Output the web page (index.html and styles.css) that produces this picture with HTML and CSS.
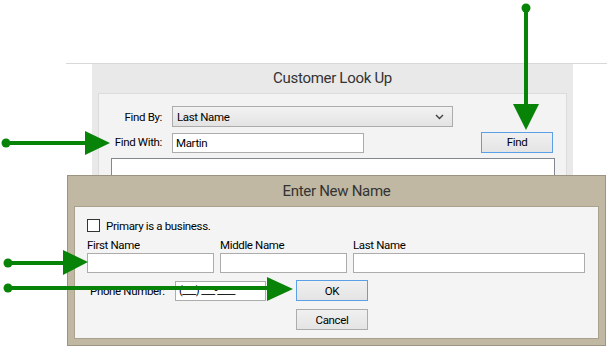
FILE: index.html
```html
<!DOCTYPE html>
<html>
  <head>
    <title>Customer Look Up</title>
    <link rel="stylesheet" href="styles.css">
  </head>
  <body>
    <div class="desk">
      <div class="lookup-window">
        <p class="window-title">Customer Look Up</p>
        <div class="lookup-panel">
          <div class="lookup-row">
            <span class="row-label">Find By:</span>
            <div class="combo">
              <span>Last Name</span>
              <svg class="combo-arrow" width="9" height="6" viewBox="0 0 9 6">
                <polyline points="1,1 4.5,4.5 8,1" fill="none" stroke="#404040" stroke-width="1.4"/>
              </svg>
            </div>
          </div>
          <div class="lookup-row">
            <span class="row-label">Find With:</span>
            <div class="text-box find-box">Martin</div>
            <button class="win-button focused find-button">Find</button>
          </div>
          <div class="results-list"></div>
        </div>
      </div>
    </div>

    <div class="name-dialog">
      <p class="dialog-title">Enter New Name</p>
      <div class="dialog-client">
        <div class="check-row">
          <span class="check-box"></span>
          <span>Primary is a business.</span>
        </div>
        <div class="name-grid">
          <span class="field-label">First Name</span>
          <span class="field-label">Middle Name</span>
          <span class="field-label">Last Name</span>
          <div class="text-box"></div>
          <div class="text-box"></div>
          <div class="text-box"></div>
        </div>
        <div class="bottom-row">
          <div class="phone-row">
            <span class="phone-label">Phone Number:</span>
            <div class="text-box phone-box">(___) ___-____</div>
          </div>
          <div class="dialog-buttons">
            <button class="win-button focused">OK</button>
            <button class="win-button">Cancel</button>
          </div>
        </div>
      </div>
    </div>

    <!-- callout arrows drawn over the screens -->
    <svg class="arrows" width="607" height="346" viewBox="0 0 607 346">
      <g fill="#078407" stroke="#078407">
        <circle cx="526" cy="8" r="4.5" stroke="none"/>
        <line x1="526" y1="8" x2="526" y2="106" stroke-width="4"/>
        <polygon points="513,104 539,104 526,130" stroke="none"/>

        <circle cx="6" cy="143" r="4.5" stroke="none"/>
        <line x1="6" y1="143" x2="87" y2="143" stroke-width="4"/>
        <polygon points="85,131 85,155 110,143" stroke="none"/>

        <circle cx="8" cy="263" r="4.5" stroke="none"/>
        <line x1="8" y1="263" x2="65" y2="263" stroke-width="4"/>
        <polygon points="63,250 63,275 88,262" stroke="none"/>

        <circle cx="8" cy="288" r="4.5" stroke="none"/>
        <line x1="8" y1="288" x2="269" y2="288" stroke-width="4"/>
        <polygon points="267,277 267,301 293,289" stroke="none"/>
      </g>
    </svg>
  </body>
</html>
```

FILE: styles.css
```css
body {
  margin: 0;
  width: 607px;
  height: 346px;
  position: relative;
  overflow: hidden;
  background-color: white;
  font-family: Roboto, "Liberation Sans", sans-serif;
  font-size: 11.5px;
  letter-spacing: -0.35px;
  color: black;
}
.desk {
  margin: 63px 0 0 66px;
  border-top: 1px solid #d8d8d8;
  height: 282px;
}
.lookup-window {
  margin-left: 26px;
  width: 481px;
  height: 282px;
  background-color: #e9e9e9;
}
.window-title {
  margin: 0;
  height: 29px;
  line-height: 29px;
  text-align: center;
  font-size: 15px;
  letter-spacing: -0.3px;
  color: #333;
}
.lookup-panel {
  margin: 0 6px;
  height: 200px;
  padding-top: 12px;
  background-color: #f3f3f3;
  border: 1px solid #dcdcdc;
}
.lookup-row {
  display: flex;
  align-items: center;
}
.lookup-row + .lookup-row {
  margin-top: 4px;
}
.row-label {
  width: 63px;
  margin-right: 10px;
  text-align: right;
}
.combo {
  box-sizing: border-box;
  width: 281px;
  height: 21px;
  padding: 0 8px 0 4px;
  display: flex;
  align-items: center;
  justify-content: space-between;
  border: 1px solid #acacac;
  background: linear-gradient(#f2f2f2, #e3e3e3);
}
.text-box {
  box-sizing: border-box;
  height: 20px;
  padding: 0 3px;
  line-height: 18px;
  background-color: white;
  border: 1px solid #acacac;
}
.find-box {
  width: 192px;
  margin-top: 2px;
}
.win-button {
  box-sizing: border-box;
  width: 72px;
  height: 21px;
  padding: 0;
  font-family: inherit;
  font-size: 11.5px;
  letter-spacing: -0.35px;
  color: black;
  border: 1px solid #acacac;
  background: linear-gradient(#f0f0f0, #e4e4e4);
}
.win-button.focused {
  border-color: #5aa0e6;
}
.find-button {
  margin-left: 117px;
}
.results-list {
  box-sizing: border-box;
  width: 444px;
  height: 60px;
  margin: 5px 0 0 12px;
  background-color: white;
  border: 1px solid #828790;
}
.name-dialog {
  position: absolute;
  left: 67px;
  top: 175px;
  box-sizing: border-box;
  width: 539px;
  height: 171px;
  background-color: #c0b8a3;
  border: 1px solid #9c9480;
}
.dialog-title {
  margin: 0;
  height: 30px;
  line-height: 30px;
  text-align: center;
  font-size: 15px;
  letter-spacing: -0.3px;
  color: #333;
}
.dialog-client {
  box-sizing: border-box;
  height: 133px;
  margin: 0 6px;
  padding: 12px 0 0 12px;
  background-color: #f4f4f4;
  border: 1px solid #a9a18c;
}
.check-row {
  display: flex;
  align-items: center;
  gap: 6px;
  height: 13px;
}
.check-box {
  box-sizing: border-box;
  width: 13px;
  height: 13px;
  background-color: white;
  border: 1px solid #333;
}
.name-grid {
  display: grid;
  grid-template-columns: 127px 127px 232px;
  column-gap: 6px;
  row-gap: 1px;
  margin-top: 6px;
}
.field-label {
  line-height: 14px;
}
.bottom-row {
  display: flex;
  align-items: flex-start;
  margin-top: 7px;
}
.phone-row {
  display: flex;
  align-items: center;
  flex-shrink: 0;
  margin-top: 1px;
}
.phone-label {
  width: 85px;
  margin-left: 3px;
  white-space: nowrap;
  flex-shrink: 0;
}
.phone-box {
  width: 91px;
  flex-shrink: 0;
  font-size: 11px;
  letter-spacing: -0.5px;
}
.dialog-buttons {
  display: flex;
  flex-direction: column;
  gap: 8px;
  margin-left: 30px;
}
.arrows {
  position: absolute;
  left: 0;
  top: 0;
  pointer-events: none;
}
```
